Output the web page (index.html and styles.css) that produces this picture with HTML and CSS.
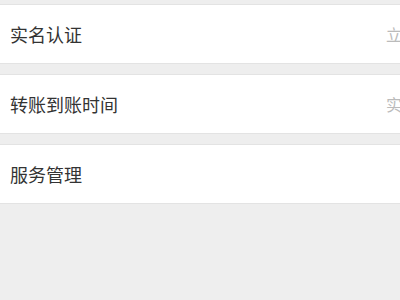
FILE: index.html
```html
<!DOCTYPE html>
<html lang="zh-CN">
<head>
    <meta charset="UTF-8">
    <meta name="viewport" content="width=device-width, initial-scale=1.0">
    <title>设置</title>
    <link rel="stylesheet" href="styles.css">
</head>
<body>
    <div class="list">
        <div class="group">
            <div class="item">
                <span class="label">实名认证</span>
                <span class="value">立即认证</span>
            </div>
        </div>
        <div class="group">
            <div class="item">
                <span class="label">转账到账时间</span>
                <span class="value">实时到账</span>
            </div>
        </div>
        <div class="group">
            <div class="item">
                <span class="label">服务管理</span>
            </div>
        </div>
    </div>
</body>
</html>
```

FILE: styles.css
```css
html, body {
    margin: 0;
    padding: 0;
    height: 100%;
    overflow: hidden;
    background-color: #eeeeee;
    font-family: "Noto Sans CJK SC", "Noto Sans", sans-serif;
    color: #333;
}
.list {
    width: 460px;
    padding-top: 4px;
}
.group {
    background-color: #fff;
    border-top: 1px solid #e3e3e3;
    border-bottom: 1px solid #e3e3e3;
    margin-bottom: 10px;
}
.item {
    display: flex;
    justify-content: space-between;
    align-items: center;
    height: 58px;
    padding: 0 10px;
}
.label {
    font-size: 18px;
}
.value {
    font-size: 16px;
    color: #bbb;
}
```
